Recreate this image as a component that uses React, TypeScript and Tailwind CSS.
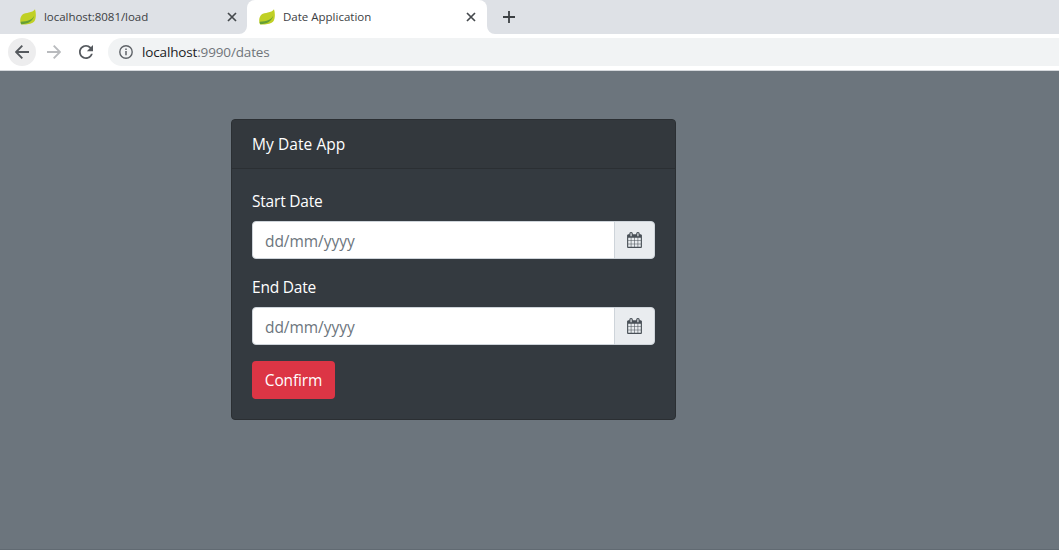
import React from "react";

function Leaf() {
  return (
    <svg className="h-4 w-4 shrink-0" viewBox="0 0 16 16">
      <path d="M15 .3C16.200 4 16.300 9 14.400 12.300 12 15.500 5 15.900 1 15.300-.3 12.500-.2 8 2.600 5.600 5.500 3.300 12.500 4.400 15 .3Z" fill="#c0d025" />
      <path d="M14.200 6.800C12.500 10.500 8 12.500.7 12.700c-.1 1 .1 1.800.5 2.500C7.500 15.300 13 12.200 14.200 6.800Z" fill="#649f35" />
    </svg>
  );
}

function Close() {
  return (
    <svg className="h-[10px] w-[10px] shrink-0" viewBox="0 0 10 10" stroke="#45494d" strokeWidth="1.7">
      <path d="M1 1l8 8M9 1l-8 8" />
    </svg>
  );
}

function CalendarIcon() {
  return (
    <svg className="h-4 w-[15px]" viewBox="0 0 1664 1792" fill="#495057">
      <path d="M128 1664h288v-288h-288v288zM480 1664h320v-288h-320v288zM128 1312h288v-320h-288v320zM480 1312h320v-320h-320v320zM128 928h288v-288h-288v288zM864 1664h320v-288h-320v288zM480 928h320v-288h-320v288zM1248 1664h288v-288h-288v288zM864 1312h320v-320h-320v320zM512 448v-288q0-13-9.500-22.500t-22.500-9.500h-64q-13 0-22.500 9.500t-9.500 22.500v288q0 13 9.500 22.500t22.500 9.500h64q13 0 22.500-9.500t9.500-22.500zM1248 1312h288v-320h-288v320zM864 928h320v-288h-320v288zM1248 928h288v-288h-288v288zM1280 448v-288q0-13-9.500-22.500t-22.500-9.500h-64q-13 0-22.500 9.500t-9.500 22.500v288q0 13 9.500 22.500t22.500 9.500h64q13 0 22.500-9.500t9.500-22.500zM1664 384v1280q0 52-38 90t-90 38h-1408q-52 0-90-38t-38-90v-1280q0-52 38-90t90-38h128v-96q0-66 47-113t113-47h64q66 0 113 47t47 113v96h384v-96q0-66 47-113t113-47h64q66 0 113 47t47 113v96h128q52 0 90 38t38 90z" fillRule="evenodd" />
    </svg>
  );
}

function DateField({ label, id }: { label: string; id: string }) {
  return (
    <div className="mb-4">
      <label htmlFor={id} className="mb-2 block h-6 leading-6">
        <span className="tracking-[-0.2px]">{label}</span>
      </label>
      <div className="flex h-[38px]">
        <input
          id={id}
          placeholder="dd/mm/yyyy"
          className="min-w-0 flex-1 rounded-l border border-[#ced4da] bg-white px-3 pt-[3px] tracking-[-0.05px] text-[#495057] outline-none placeholder:text-[#6c757d]"
        />
        <span className="-ml-px flex w-[41px] items-center justify-center rounded-r border border-[#ced4da] bg-[#e9ecef]">
          <CalendarIcon />
        </span>
      </div>
    </div>
  );
}

export default function App() {
  return (
    <div className="flex h-[550px] w-full flex-col overflow-hidden bg-[#6c757d] font-['Open_Sans','Noto_Sans',sans-serif]">
      <div className="flex h-[34px] shrink-0 bg-[#dee1e6] text-[11.500px] text-[#3c4043]">
        <div className="flex w-[247px] items-center rounded-br-lg pr-[10px] pl-5">
          <Leaf />
          <span className="ml-2 flex-1 tracking-[-0.04px]">localhost:8081/load</span>
          <Close />
        </div>
        <div className="relative flex w-60 items-center rounded-t-lg bg-white pr-[11px] pl-3">
          <svg className="absolute bottom-0 -left-2 h-2 w-2" viewBox="0 0 8 8"><path d="M8 0v8H0a8 8 0 0 0 8-8Z" fill="#fff" /></svg>
          <svg className="absolute -right-2 bottom-0 h-2 w-2" viewBox="0 0 8 8"><path d="M0 0v8h8a8 8 0 0 1-8-8Z" fill="#fff" /></svg>
          <Leaf />
          <span className="ml-2 flex-1">Date Application</span>
          <Close />
        </div>
        <div className="flex items-center pl-4">
          <svg className="h-3 w-3" viewBox="0 0 12 12" stroke="#3c4043" strokeWidth="1.800"><path d="M6 0v12M0 6h12" /></svg>
        </div>
      </div>
      <div className="flex h-[37px] shrink-0 items-center border-b border-[#d5d8dc] bg-white pl-2">
        <div className="flex h-7 w-7 items-center justify-center rounded-full bg-[#ededee]">
          <svg className="h-[14px] w-[14px]" viewBox="0 0 14 14" fill="none" stroke="#55595e" strokeWidth="1.900"><path d="M14 7H1.300M7.300.7 1 7l6.300 6.300" /></svg>
        </div>
        <svg className="ml-[11px] h-[14px] w-[14px]" viewBox="0 0 14 14" fill="none" stroke="#b9bbbe" strokeWidth="1.900"><path d="M0 7h12.700M6.700.7 13 7l-6.300 6.300" /></svg>
        <svg className="ml-[18px] h-[14px] w-[14px]" viewBox="4 4 16 16" fill="#55595e"><path d="M17.650 6.350C16.200 4.900 14.210 4 12 4c-4.420 0-7.990 3.580-7.990 8s3.570 8 7.990 8c3.730 0 6.840-2.550 7.730-6h-2.080c-.82 2.330-3.040 4-5.650 4-3.310 0-6-2.690-6-6s2.690-6 6-6c1.660 0 3.140.69 4.220 1.780L13 11h7V4l-2.350 2.350z" /></svg>
        <div className="ml-[15px] flex h-7 flex-1 items-center rounded-l-full bg-[#f1f3f4] pl-[11px] text-[13.500px] text-[#70757a]">
          <svg className="h-[14px] w-[14px]" viewBox="0 0 14 14" fill="none" stroke="#5f6368" strokeWidth="1.400"><circle cx="7" cy="7" r="6.200" /><path d="M7 6v4.300M7 3.400v1.500" strokeWidth="1.500" /></svg>
          <span className="ml-[9px] tracking-[-0.15px]"><span className="text-[#202124]">localhost</span>:9990/dates</span>
        </div>
      </div>
      <main className="flex-1 pt-12 pl-[231px]">
        <section className="h-[301px] w-[445px] overflow-hidden rounded border border-[#2b2f33] bg-[#343a40] text-[15.500px] text-white">
          <header className="flex h-[49px] items-center border-b border-[#2b2f33] bg-[#33383d] px-5 pt-[2px]">
            <span className="tracking-[0.07px]">My Date App</span>
          </header>
          <form className="p-5" onSubmit={(event) => event.preventDefault()}>
            <DateField id="start" label="Start Date" />
            <DateField id="end" label="End Date" />
            <button type="submit" className="h-[38px] w-[83px] rounded bg-[#dc3545] pt-[2px]">
              <span className="tracking-[-0.15px]">Confirm</span>
            </button>
          </form>
        </section>
      </main>
      <div className="h-px shrink-0 bg-[#616a72]" />
    </div>
  );
}
